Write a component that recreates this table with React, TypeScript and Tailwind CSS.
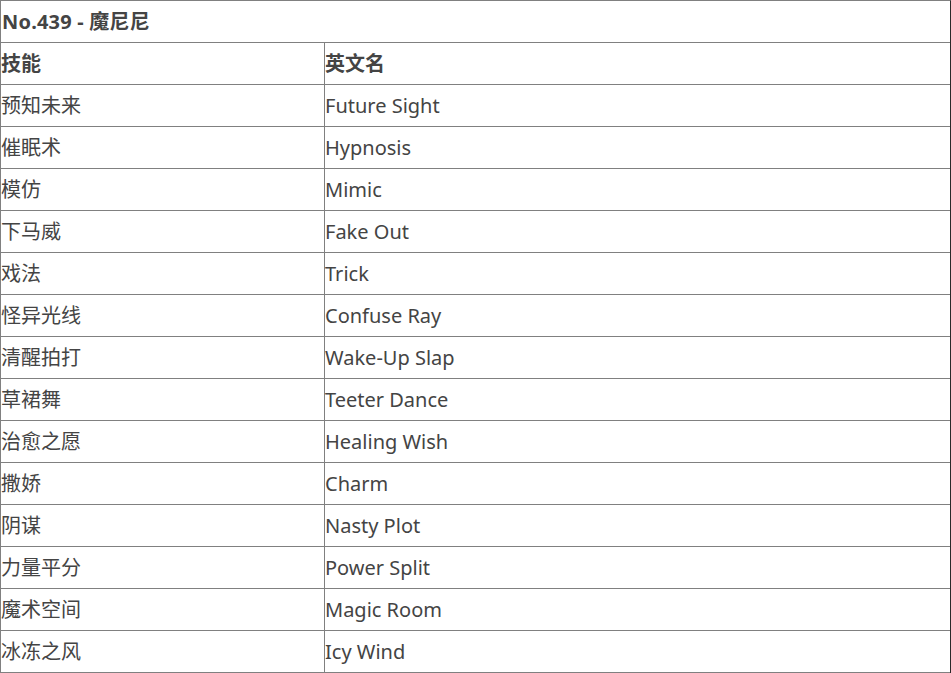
import React from "react";

const moves: [string, string][] = [
  ["预知未来", "Future Sight"],
  ["催眠术", "Hypnosis"],
  ["模仿", "Mimic"],
  ["下马威", "Fake Out"],
  ["戏法", "Trick"],
  ["怪异光线", "Confuse Ray"],
  ["清醒拍打", "Wake-Up Slap"],
  ["草裙舞", "Teeter Dance"],
  ["治愈之愿", "Healing Wish"],
  ["撒娇", "Charm"],
  ["阴谋", "Nasty Plot"],
  ["力量平分", "Power Split"],
  ["魔术空间", "Magic Room"],
  ["冰冻之风", "Icy Wind"],
];

const App = () => {
  return (
    <div
      className="w-[951px] bg-white text-[#444] text-[20px] leading-[41px]"
      style={{ fontFamily: '"Noto Sans", "Noto Sans CJK SC", sans-serif' }}
    >
      <div className="border-t border-l border-r border-t-[#808080] border-l-[#808080] border-r-[#2a2a2a]">
        <div className="h-[42px] border-b border-[#808080] font-bold pl-px tracking-[0.2px]">No.439 - 魔尼尼</div>
        <div className="flex h-[42px] border-b border-[#808080] font-bold">
          <div className="w-[324px] border-r border-[#808080]">技能</div>
          <div className="flex-1">英文名</div>
        </div>
        {moves.map(([cn, en]) => (
          <div key={en} className="flex h-[42px] border-b border-[#808080]">
            <div className="w-[324px] border-r border-[#808080]">{cn}</div>
            <div className="flex-1">{en}</div>
          </div>
        ))}
      </div>
    </div>
  );
};

export default App;
